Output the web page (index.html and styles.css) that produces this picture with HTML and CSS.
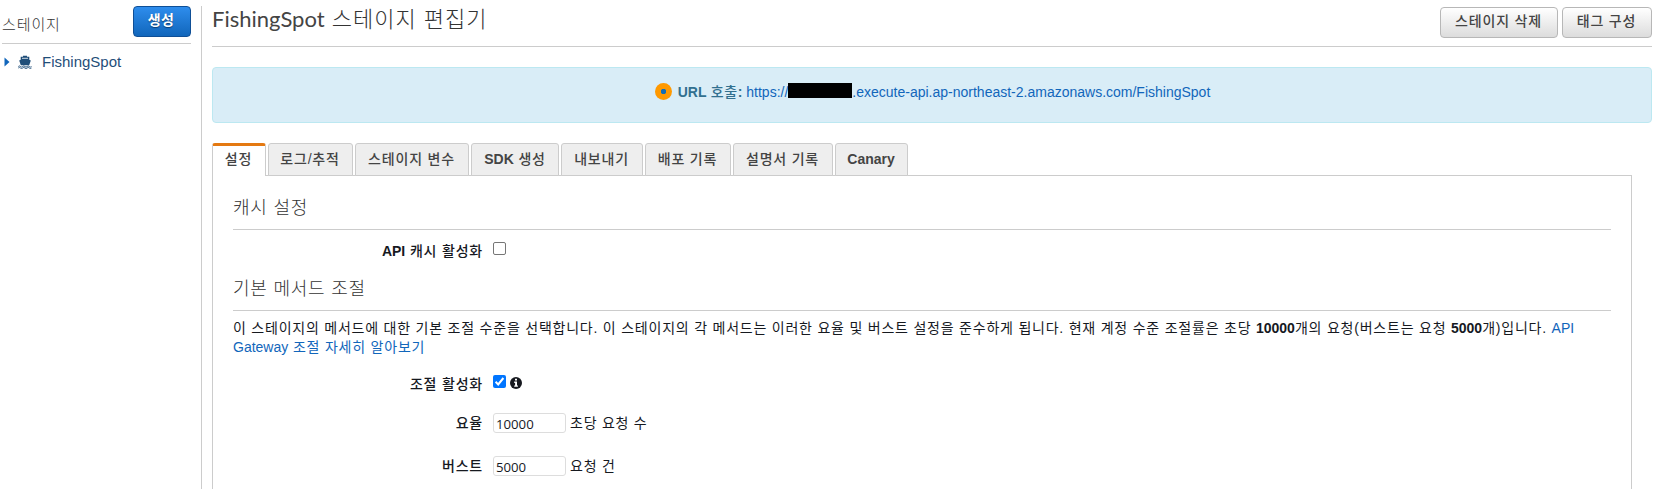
FILE: index.html
```html
<!DOCTYPE html>
<html lang="ko">
<head>
<meta charset="utf-8">
<title>FishingSpot 스테이지 편집기</title>
<link rel="stylesheet" href="styles.css">
</head>
<body>
<div class="app">
  <aside class="sidebar">
    <div class="side-head">
      <span class="side-title">스테이지</span>
      <button class="btn primary">생성</button>
    </div>
    <div class="tree-row">
      <svg class="caret" viewBox="0 0 6 10"><path d="M0.500 0.500 5.500 5 0.500 9.500z" fill="#1166bb"/></svg>
      <svg class="ship" viewBox="0 0 14 14"><path d="M5 .8h4v1h2.300v3l1.500.7-1.600 4.700H2.800L1.200 5.500l1.500-.7v-3H5z" fill="#1f4e79"/><path d="M4 3.300h6" stroke="#fff" stroke-width=".8"/><path d="M.3 11.500q1.100-1.200 2.200 0t2.200 0 2.200 0 2.200 0 2.200 0 2.200 0M.3 13q1.100-1.200 2.200 0t2.200 0 2.200 0 2.200 0 2.200 0 2.200 0" fill="none" stroke="#1f4e79" stroke-width=".9"/></svg>
      <span class="tree-name">FishingSpot</span>
    </div>
  </aside>
  <main class="main">
    <header class="head">
      <h1 class="title"><span class="title-en">FishingSpot</span> 스테이지 편집기</h1>
      <div class="actions">
        <button class="btn del">스테이지 삭제</button>
        <button class="btn tag">태그 구성</button>
      </div>
    </header>
    <div class="alert">
      <span class="dot"></span>
      <span class="url-label"><b>URL</b> 호출<b>:</b></span>
      <a class="url"><span>https://</span><span class="mask"></span><span>.execute-api.ap-northeast-2.amazonaws.com/FishingSpot</span></a>
    </div>
    <nav class="tabs">
      <span class="tab active t1">설정</span>
      <span class="tab t2">로그/추적</span>
      <span class="tab t3">스테이지 변수</span>
      <span class="tab t4"><b>SDK</b> 생성</span>
      <span class="tab t5">내보내기</span>
      <span class="tab t6">배포 기록</span>
      <span class="tab t7">설명서 기록</span>
      <span class="tab t8"><b>Canary</b></span>
    </nav>
    <section class="panel">
      <h2 class="sub">캐시 설정</h2>
      <div class="row row-cache"><label class="label"><b>API</b> 캐시 활성화</label><span class="check"></span></div>
      <h2 class="sub">기본 메서드 조절</h2>
      <p class="desc">이 스테이지의 메서드에 대한 기본 조절 수준을 선택합니다. 이 스테이지의 각 메서드는 이러한 요율 및 버스트 설정을 준수하게 됩니다. 현재 계정 수준 조절률은 초당 <b>10000</b>개의 요청(버스트는 요청 <b>5000</b>개)입니다. <a><span class="latin">API</span><br><span class="latin">Gateway</span> 조절 자세히 알아보기</a></p>
      <div class="row row-throttle"><label class="label">조절 활성화</label><span class="check on"><svg viewBox="0 0 13 13"><path d="M2.600 6.800 5.200 9.400 10.400 3" fill="none" stroke="#fff" stroke-width="2"/></svg></span>
        <svg class="info" viewBox="0 0 12 12"><circle cx="6" cy="6" r="6" fill="#16191f"/><path d="M5 1.800h2v1.700H5zM4.200 4.600H7v3.800h.9v1.300H4.200V8.400h.9V5.900h-.9z" fill="#fff"/></svg></div>
      <div class="row row-rate"><label class="label">요율</label><span class="input">10000</span><span class="unit">초당 요청 수</span></div>
      <div class="row row-burst"><label class="label">버스트</label><span class="input">5000</span><span class="unit">요청 건</span></div>
    </section>
  </main>
</div>
</body>
</html>
```
FILE: styles.css
```css
* { box-sizing: border-box; }
body {
  margin: 0;
  width: 1654px;
  height: 489px;
  overflow: hidden;
  background: #fff;
  color: #16191f;
  font: 14px/19px "Liberation Sans", "Noto Sans CJK KR", sans-serif;
}
b, .latin { letter-spacing: 0; }
.app { display: flex; height: 489px; padding-top: 6px; }
.sidebar { width: 202px; padding: 0 10px 0 2px; border-right: 1px solid #ccc; }
.side-head {
  display: flex;
  justify-content: space-between;
  height: 38px;
  border-bottom: 1px solid #ccc;
  color: #333;
}
.side-title { padding-top: 9px; font-size: 15px; font-weight: 300; letter-spacing: .9px; }
.btn {
  height: 31px;
  padding: 0 1px 2px 0;
  border: 1px solid #b7b7b7;
  border-radius: 4px;
  background: linear-gradient(#fff, #dcdcdc);
  color: #444;
  font: 500 14px/25px "Liberation Sans", "Noto Sans CJK KR", sans-serif;
  letter-spacing: .8px;
}
.primary {
  width: 58px;
  padding-right: 2px;
  border-color: #0f4f96;
  background: linear-gradient(#2e8ded, #1166bb);
  color: #fff;
  font-weight: 700;
  letter-spacing: .3px;
  text-shadow: 0 1px 1px #0b3c73;
}
.tree-row { display: flex; align-items: center; height: 35px; padding-left: 2px; color: #1f4e79; }
.caret { width: 6px; height: 10px; }
.ship { width: 14px; height: 14px; margin-left: 8px; }
.tree-name { margin: -1px 0 0 10px; font-size: 15px; }
.main { flex: 1; padding-left: 10px; }
.head {
  display: flex;
  justify-content: space-between;
  height: 41px;
  margin-right: 2px;
  border-bottom: 1px solid #ccc;
}
.title {
  margin: -3px 0 0;
  color: #333;
  font: 300 22px/28px "Noto Sans CJK KR", sans-serif;
  letter-spacing: 1px;
  white-space: nowrap;
}
.title-en { color: #444; font-family: Lato, sans-serif; font-weight: 400; letter-spacing: 0; }
.actions { display: flex; gap: 4px; padding-top: 1px; }
.del { width: 118px; }
.tag { width: 90px; }
.alert {
  display: flex;
  justify-content: center;
  height: 56px;
  margin: 20px 2px 0 0;
  padding: 15px 0 0 1px;
  border: 1px solid #bce8f1;
  border-radius: 4px;
  background: #d9edf7;
  color: #31708f;
  white-space: nowrap;
}
.dot { width: 17px; height: 17px; border-radius: 50%; background: radial-gradient(#146eb4 0 2.5px, #f90 3px); }
.url-label { margin-left: 6px; font-weight: 500; letter-spacing: .5px; }
.url { display: flex; margin-left: 4px; color: #1166bb; }
.mask { width: 64px; height: 15px; background: #000; }
.tabs { display: flex; gap: 2px; margin-top: 20px; }
.tab {
  height: 33px;
  padding: 6px 1px 0 0;
  border: 1px solid #ccc;
  border-radius: 3px 3px 0 0;
  background: #eee;
  color: #444;
  font-weight: 500;
  letter-spacing: .8px;
  text-align: center;
}
.tab.active { padding-top: 4px; border-top: 3px solid #e47911; border-bottom: 0; background: #fff; }
.t1 { width: 54px; }
.t2 { width: 85px; }
.t3 { width: 114px; }
.t4 { width: 88px; padding-right: 0; }
.t5 { width: 82px; }
.t6 { width: 86px; }
.t7 { width: 100px; }
.t8 { width: 73px; }
.panel { height: 330px; margin: -1px 22px 0 0; padding: 17px 20px; border: 1px solid #ccc; }
.sub {
  height: 37px;
  margin: 0;
  border-bottom: 1px solid #ccc;
  color: #333;
  font: 300 18px/27px "Noto Sans CJK KR", sans-serif;
  letter-spacing: .75px;
}
.row { display: flex; }
.label { width: 250px; margin: 0 10px 0 0; font-weight: 500; letter-spacing: .8px; text-align: right; }
.row-cache { height: 44px; padding-top: 12px; }
.check { width: 13px; height: 13px; border: 1px solid #767676; border-radius: 2px; }
.check.on { display: flex; border: 0; background: #0075ff; }
.info { width: 12px; height: 12px; margin: 2px 0 0 4px; }
.desc { margin: 8px 0 0; letter-spacing: .78px; white-space: nowrap; }
.desc a { color: #1166bb; }
.row-throttle { height: 19px; margin-top: 18px; }
.row-rate { margin-top: 19px; }
.row-burst { margin-top: 23px; }
.row-rate, .row-burst { height: 20px; }
.row-rate .label, .row-burst .label { margin-top: 1px; }
.input {
  width: 73px;
  height: 20px;
  padding-left: 2px;
  border: 1px solid #ddd;
  border-radius: 3px;
  font: 13.200px/20px "Open Sans", sans-serif;
}
.unit { margin: 1px 0 -1px 4px; letter-spacing: .75px; }
```
